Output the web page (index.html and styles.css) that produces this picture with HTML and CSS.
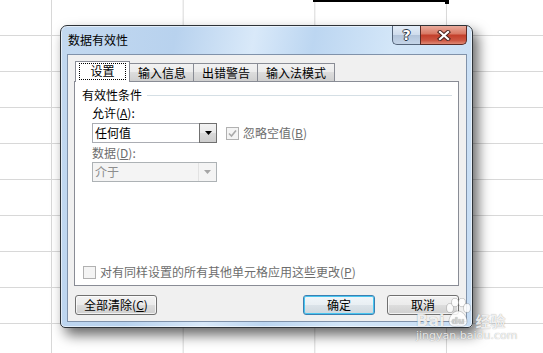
FILE: index.html
```html
<!DOCTYPE html>
<html lang="zh-CN">
<head>
    <meta charset="UTF-8">
    <meta name="viewport" content="width=device-width, initial-scale=1.0">
    <title>数据有效性</title>
    <link rel="stylesheet" href="styles.css">
</head>
<body>

<div class="sheet">
    <div class="cell-select"></div>

    <div class="dialog">
        <div class="titlebar">
            <span class="title">数据有效性</span>
            <div class="caption-btns">
                <div class="cap-btn help">?</div>
                <div class="cap-btn close">
                    <svg width="14" height="11" viewBox="0 0 14 11">
                        <path d="M3 2 L11 9 M11 2 L3 9" stroke="#4b2420" stroke-width="4.2" stroke-linecap="square" fill="none"/>
                        <path d="M3 2 L11 9 M11 2 L3 9" stroke="#fff" stroke-width="2.2" stroke-linecap="square" fill="none"/>
                    </svg>
                </div>
            </div>
        </div>

        <div class="client">
            <div class="tabs">
                <div class="tab active"><span class="focus">设置</span></div>
                <div class="tab">输入信息</div>
                <div class="tab">出错警告</div>
                <div class="tab wide">输入法模式</div>
            </div>

            <div class="panel">
                <div class="group-title"><span>有效性条件</span><i class="rule"></i></div>

                <div class="label">允许(<u>A</u>):</div>
                <div class="row">
                    <div class="combo">
                        <span class="value">任何值</span>
                        <span class="drop">
                            <svg width="7" height="4" viewBox="0 0 7 4"><path d="M0 0 H7 L3.5 4 Z" fill="#000"/></svg>
                        </span>
                    </div>
                    <div class="check disabled">
                        <span class="box">
                            <svg width="11" height="11" viewBox="0 0 11 11"><path d="M2 5.5 L4.5 8 L9 2.5" stroke="#a9a9a9" stroke-width="1.6" fill="none"/></svg>
                        </span>
                        <span>忽略空值(<u>B</u>)</span>
                    </div>
                </div>

                <div class="label disabled">数据(<u>D</u>):</div>
                <div class="combo disabled">
                    <span class="value">介于</span>
                    <span class="drop">
                        <svg width="7" height="4" viewBox="0 0 7 4"><path d="M0 0 H7 L3.5 4 Z" fill="#a6a6a6"/></svg>
                    </span>
                </div>

                <div class="check disabled apply">
                    <span class="box"></span>
                    <span>对有同样设置的所有其他单元格应用这些更改(<u>P</u>)</span>
                </div>
            </div>

            <div class="buttons">
                <button class="btn clear">全部清除(<u>C</u>)</button>
                <button class="btn default">确定</button>
                <button class="btn">取消</button>
            </div>
        </div>
    </div>

    <!-- site watermark -->
    <div class="watermark">
        <div class="wm-top">
            <span class="wm-bai">Bai</span>
            <svg class="wm-paw" width="28" height="30" viewBox="0 0 28 30">
                <ellipse cx="6" cy="10" rx="3.5" ry="4.5" />
                <ellipse cx="11" cy="4.5" rx="3.5" ry="4.2" />
                <ellipse cx="18" cy="4.5" rx="3.5" ry="4.2" />
                <ellipse cx="23" cy="10" rx="3.5" ry="4.5" />
                <path d="M14 13 C9 13 5 19 5 23 C5 28 9 29 14 28 C19 29 23 28 23 23 C23 19 19 13 14 13 Z" />
                <text x="14" y="26" text-anchor="middle">du</text>
            </svg>
            <span class="wm-jy">经验</span>
        </div>
        <div class="wm-url">jingyan.baidu.com</div>
    </div>
</div>

</body>
</html>
```

FILE: styles.css
```css
body {
    margin: 0;
    font-family: "Noto Sans CJK SC", "Liberation Sans", sans-serif;
    font-size: 12px;
    color: #000;
}
.sheet {
    position: relative;
    width: 543px;
    height: 353px;
    overflow: hidden;
    background-color: #fff;
    background-image:
        linear-gradient(to right, #d8d8d8 1px, transparent 1px),
        linear-gradient(to bottom, #d8d8d8 1px, transparent 1px);
    background-size: 131.67px 100%, 100% 36px;
    background-position: 51px 0, 0 35px;
}
.cell-select {
    position: absolute;
    left: 313px;
    top: 0;
    width: 133px;
    height: 2px;
    background: #000;
}
.cell-select::after {
    content: "";
    position: absolute;
    right: -3px;
    top: 0;
    width: 4px;
    height: 4px;
    background: #000;
}

/* dialog window */
.dialog {
    position: absolute;
    left: 60px;
    top: 25px;
    width: 413px;
    height: 303px;
    box-sizing: border-box;
    padding: 0 5px 5px 6px;
    border: 1px solid #2e3338;
    border-radius: 7px 7px 5px 5px;
    background: linear-gradient(100deg, #c3d9f0 0%, #b8d2ee 25%, #d9e9f9 42%, #bcd6f1 55%, #d3e6f8 72%, #c6dcf3 100%);
    box-shadow: inset 0 0 0 1px rgba(255,255,255,0.55), 5px 7px 13px rgba(0,0,0,0.6);
    display: flex;
    flex-direction: column;
}
.titlebar {
    height: 28px;
    display: flex;
    justify-content: space-between;
    align-items: flex-start;
}
.title {
    margin: 7px 0 0 1px;
    line-height: 14px;
}
.caption-btns { display: flex; }
.cap-btn {
    height: 19px;
    box-sizing: border-box;
    display: flex;
    align-items: center;
    justify-content: center;
}
.cap-btn.help {
    width: 28px;
    border: 1px solid #55657a;
    border-top: none;
    border-right: none;
    border-radius: 0 0 0 5px;
    background: linear-gradient(#e4edf8 0%, #cfdcec 48%, #b3c4da 52%, #c5d5e8 100%);
    color: #fff;
    font-family: "DejaVu Sans", sans-serif;
    font-weight: bold;
    font-size: 14px;
    text-shadow: 1px 0 #2f3a48, -1px 0 #2f3a48, 0 1px #2f3a48, 0 -1px #2f3a48;
}
.cap-btn.close {
    width: 47px;
    border: 1px solid #5b2a24;
    border-top: none;
    border-radius: 0 0 5px 0;
    background: linear-gradient(#e9ab9c 0%, #d97a66 42%, #c3402c 52%, #cc5642 80%, #e08a76 100%);
}

/* client area */
.client {
    height: 268px;
    box-sizing: border-box;
    border: 1px solid #8092aa;
    background: #f0f0f0;
    padding: 6px 8px 0 6px;
    display: flex;
    flex-direction: column;
}
.tabs {
    display: flex;
    align-items: flex-end;
    height: 21px;
    margin: 0 0 -1px 1px;
    position: relative;
    z-index: 1;
}
.tab {
    height: 18px;
    box-sizing: border-box;
    margin-bottom: 1px;
    padding: 0 7px 0 8px;
    border: 1px solid #898c95;
    border-bottom: none;
    background: linear-gradient(#f2f2f2 0%, #ebebeb 50%, #dddddd 50%, #cfcfcf 100%);
    display: flex;
    align-items: center;
    line-height: 14px;
}
.tab + .tab { margin-left: -1px; }
.tab.wide { padding: 0 8px; }
.tab.active {
    height: 21px;
    width: 55px;
    margin-bottom: 0;
    padding: 0;
    justify-content: center;
    background: #fff;
    position: relative;
    z-index: 2;
}
.focus {
    outline: 1px dotted #000;
    padding: 0 10px 1px;
    line-height: 14px;
    margin-top: -1px;
}
.panel {
    width: 385px;
    height: 205px;
    box-sizing: border-box;
    border: 1px solid #898c95;
    background: #fff;
    display: flex;
    flex-direction: column;
}
.group-title {
    display: flex;
    align-items: center;
    padding: 6px 6px 0 7px;
    line-height: 14px;
}
.rule {
    flex: 1;
    height: 1px;
    margin-left: 5px;
    background: #d5dfe5;
}
.label {
    margin: 4px 0 0 17px;
    line-height: 14px;
}
.label.disabled {
    margin-top: 3px;
    color: #6d6d6d;
}
.row {
    display: flex;
    align-items: center;
    margin: 3px 0 0 17px;
}
.combo {
    width: 125px;
    height: 20px;
    box-sizing: border-box;
    border: 1px solid #abadb3;
    background: #fff;
    display: flex;
}
.combo .value {
    flex: 1;
    padding-left: 2px;
    line-height: 18px;
}
.combo .drop {
    width: 18px;
    height: 20px;
    margin: -1px -1px -1px 0;
    box-sizing: border-box;
    border: 1px solid #707070;
    background: linear-gradient(#f3f3f3 0%, #e9e9e9 50%, #d9d9d9 51%, #cdcdcd 100%);
    display: flex;
    align-items: center;
    justify-content: center;
}
.combo.disabled {
    margin: 2px 0 0 17px;
    border-color: #adb2b5;
    background: #f4f4f4;
    color: #8d8d8d;
}
.combo.disabled .drop {
    margin: 0;
    height: 18px;
    border: none;
    border-left: 1px solid #e2e2e2;
    background: #f4f4f4;
}
.check {
    display: flex;
    align-items: center;
    line-height: 14px;
}
.check.disabled { color: #6d6d6d; }
.row .check { margin-left: 9px; }
.box {
    width: 13px;
    height: 13px;
    box-sizing: border-box;
    margin-right: 4px;
    border: 1px solid #b1b1b1;
    background: #f4f4f4;
    display: flex;
    align-items: center;
    justify-content: center;
}
.check.apply {
    margin: auto 0 6px 8px;
}

/* bottom buttons */
.buttons {
    display: flex;
    width: 385px;
    margin-top: 9px;
    padding-left: 1px;
    box-sizing: border-box;
}
.btn {
    width: 72px;
    height: 20px;
    padding: 0;
    border: 1px solid #707070;
    border-radius: 3px;
    background: linear-gradient(#f2f2f2 0%, #ebebeb 50%, #dddddd 51%, #cfcfcf 100%);
    box-shadow: inset 0 0 0 1px rgba(255,255,255,0.7);
    font-family: inherit;
    font-size: 12px;
    line-height: 16px;
    color: #000;
}
.btn.clear { width: 82px; }
.btn.default {
    margin-left: auto;
    margin-right: 12px;
    border-color: #3c7fb1;
    box-shadow: inset 0 0 0 1px #48c6f0;
    background: linear-gradient(#f0f6fa 0%, #e9eff3 50%, #dbe3e9 51%, #cfd8de 100%);
}

/* watermark */
.watermark {
    position: absolute;
    left: 416px;
    top: 298px;
    color: rgba(255,255,255,0.85);
    font-family: "DejaVu Sans", sans-serif;
    font-weight: bold;
    text-shadow: 0 0 1px rgba(0,0,0,0.4);
}
.wm-top {
    display: flex;
    align-items: flex-end;
}
.wm-bai {
    font-size: 16px;
    line-height: 12px;
    margin-bottom: 1px;
}
.wm-paw {
    fill: rgba(255,255,255,0.85);
    stroke: rgba(0,0,0,0.22);
    stroke-width: 0.8;
}
.wm-paw text {
    font-size: 9px;
    font-weight: bold;
    fill: #cfcfcf;
    stroke: none;
}
.wm-jy {
    font-family: "Noto Sans CJK SC", sans-serif;
    font-size: 15px;
    line-height: 12px;
    margin: 0 0 1px 3px;
}
.wm-url {
    font-size: 11px;
    font-weight: normal;
    line-height: 12px;
    margin-top: 2px;
}
```
